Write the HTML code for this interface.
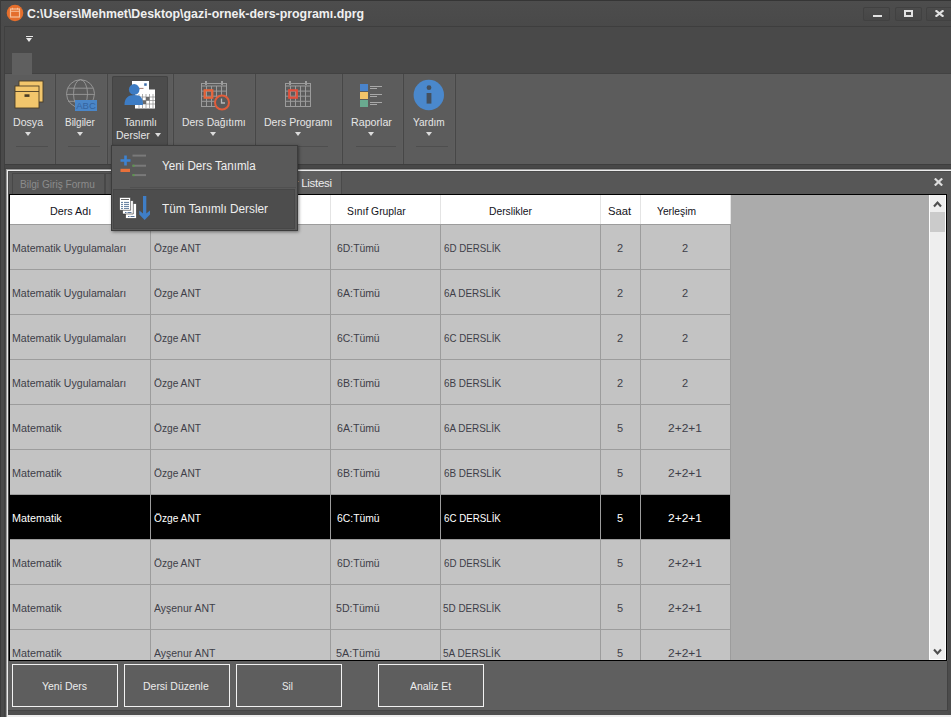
<!DOCTYPE html>
<html><head><meta charset="utf-8"><style>
*{margin:0;padding:0;box-sizing:border-box}
html,body{width:951px;height:717px;overflow:hidden;background:#4b4b4b;font-family:"Liberation Sans",sans-serif}
.a{position:absolute}
.t{position:absolute;white-space:nowrap;line-height:1}
.arr{position:absolute;width:0;height:0;border-left:3.5px solid transparent;border-right:3.5px solid transparent;border-top:4px solid #dcdcdc}
</style></head><body>
<div class="a" style="left:0px;top:0px;width:951px;height:27px;background:linear-gradient(#4d4d4d,#494949);"></div>
<div class="a" style="left:0px;top:0px;width:951px;height:1px;background:#353535;"></div>
<div class="a" style="left:0px;top:0px;width:1px;height:717px;background:#3a3a3a;"></div>
<div class="a" style="left:1px;top:26px;width:4px;height:691px;background:#4a4a4a;"></div>
<div class="a" style="left:4px;top:26px;width:1px;height:691px;background:#404040;"></div>
<div class="a" style="left:5px;top:26px;width:946px;height:1px;background:#3e3e3e;"></div>
<div class="a" style="left:5px;top:27px;width:946px;height:46px;background:#494949;"></div>
<div class="a" style="left:5px;top:73px;width:946px;height:1px;background:#424242;"></div>
<div class="a" style="left:5px;top:74px;width:946px;height:90px;background:#5c5c5c;"></div>
<div class="a" style="left:12px;top:53px;width:20px;height:22px;background:#5f5f5f;"></div>
<div class="a" style="left:5px;top:164px;width:946px;height:5px;background:#484848;"></div>
<div class="a" style="left:5px;top:164px;width:946px;height:1px;background:#3e3e3e;"></div>
<div class="a" style="left:5px;top:168px;width:946px;height:1px;background:#424242;"></div>
<div class="a" style="left:6px;top:169px;width:945px;height:548px;background:#575757;"></div>
<div class="a" style="left:6px;top:169px;width:945px;height:1px;background:#9a9a9a;"></div>
<div class="a" style="left:7px;top:170px;width:944px;height:1px;background:#ececec;"></div>
<div class="a" style="left:6px;top:170px;width:1px;height:547px;background:#9a9a9a;"></div>
<div class="a" style="left:7px;top:170px;width:1px;height:547px;background:#ececec;"></div>
<div class="a" style="left:8px;top:171px;width:943px;height:1px;background:#4a4a4a;"></div>
<div class="a" style="left:8px;top:171px;width:1px;height:546px;background:#4a4a4a;"></div>
<div class="a" style="left:7px;top:715px;width:944px;height:2px;background:#ececec;"></div>
<div class="a" style="left:8px;top:710px;width:943px;height:5px;background:#4e4e4e;"></div>
<div class="a" style="left:8px;top:710px;width:940px;height:1px;background:#444444;"></div>
<div class="a" style="left:947px;top:661px;width:1px;height:49px;background:#424242;"></div>
<div class="a" style="left:948px;top:190px;width:3px;height:525px;background:linear-gradient(#555,#4c4c4c 30%);"></div>
<svg class="a" style="left:6px;top:4px" width="18" height="18" viewBox="0 0 18 18"><circle cx="9" cy="9" r="8.3" fill="#e46e2c"/><rect x="4.5" y="5" width="9" height="8" fill="none" stroke="#f6c09a" stroke-width="1.2"/><line x1="4.5" y1="7.3" x2="13.5" y2="7.3" stroke="#f6c09a" stroke-width="1"/><line x1="6.5" y1="3.8" x2="6.5" y2="5.5" stroke="#f6c09a" stroke-width="1"/><line x1="11.5" y1="3.8" x2="11.5" y2="5.5" stroke="#f6c09a" stroke-width="1"/></svg>
<div class="t" style="left:27.0px;top:7.7px;font-size:12px;font-weight:bold;letter-spacing:0px;color:#f0f0f0;transform:scaleX(1.0297);transform-origin:0 0;">C:\Users\Mehmet\Desktop\gazi-ornek-ders-programı.dprg</div>
<div class="a" style="left:863px;top:7px;width:27px;height:14px;border-radius:2px;background:linear-gradient(#4c4c4c,#464646);box-shadow:inset 0 0 0 1px #414141"></div>
<div class="a" style="left:895px;top:7px;width:27px;height:14px;border-radius:2px;background:linear-gradient(#4c4c4c,#464646);box-shadow:inset 0 0 0 1px #414141"></div>
<div class="a" style="left:926px;top:7px;width:27px;height:14px;border-radius:2px;background:linear-gradient(#4c4c4c,#464646);box-shadow:inset 0 0 0 1px #414141"></div>
<div class="a" style="left:873px;top:14.5px;width:9px;height:2.5px;background:#e2e2e2;"></div>
<div class="a" style="left:904px;top:10px;width:9px;height:7px;border:2px solid #e2e2e2;border-top-width:2.5px"></div>
<svg class="a" style="left:935px;top:10px" width="9" height="7" viewBox="0 0 9 7"><path d="M0.6 0.3 L8.4 6.7 M8.4 0.3 L0.6 6.7" stroke="#e2e2e2" stroke-width="2.1"/></svg>
<div class="a" style="left:26px;top:36px;width:7px;height:1px;background:#e8e8e8;"></div>
<div class="arr" style="left:26px;top:38px;border-top:4px solid #e8e8e8"></div>
<div class="a" style="left:55px;top:74px;width:1px;height:90px;background:#474747;"></div>
<div class="a" style="left:54px;top:74px;width:1px;height:90px;background:#5e5e5e;"></div>
<div class="a" style="left:107px;top:74px;width:1px;height:90px;background:#474747;"></div>
<div class="a" style="left:106px;top:74px;width:1px;height:90px;background:#5e5e5e;"></div>
<div class="a" style="left:173px;top:74px;width:1px;height:90px;background:#474747;"></div>
<div class="a" style="left:172px;top:74px;width:1px;height:90px;background:#5e5e5e;"></div>
<div class="a" style="left:255px;top:74px;width:1px;height:90px;background:#474747;"></div>
<div class="a" style="left:254px;top:74px;width:1px;height:90px;background:#5e5e5e;"></div>
<div class="a" style="left:342px;top:74px;width:1px;height:90px;background:#474747;"></div>
<div class="a" style="left:341px;top:74px;width:1px;height:90px;background:#5e5e5e;"></div>
<div class="a" style="left:403px;top:74px;width:1px;height:90px;background:#474747;"></div>
<div class="a" style="left:402px;top:74px;width:1px;height:90px;background:#5e5e5e;"></div>
<div class="a" style="left:455px;top:74px;width:1px;height:90px;background:#474747;"></div>
<div class="a" style="left:454px;top:74px;width:1px;height:90px;background:#5e5e5e;"></div>
<div class="a" style="left:112px;top:76px;width:56px;height:70px;background:#4c4c4c;border-radius:2px;box-shadow:inset 0 0 0 1px #434343"></div>
<div class="t" style="left:12.6px;top:117.4px;font-size:11.5px;font-weight:normal;letter-spacing:0px;color:#e6e6e6;transform:scaleX(0.9219);transform-origin:0 0;">Dosya</div>
<div class="t" style="left:64.6px;top:117.4px;font-size:11.5px;font-weight:normal;letter-spacing:0px;color:#e6e6e6;transform:scaleX(0.8676);transform-origin:0 0;">Bilgiler</div>
<div class="t" style="left:123.5px;top:117.4px;font-size:11.5px;font-weight:normal;letter-spacing:0px;color:#e6e6e6;transform:scaleX(0.8889);transform-origin:0 0;">Tanımlı</div>
<div class="t" style="left:115.9px;top:130.0px;font-size:11.5px;font-weight:normal;letter-spacing:0px;color:#e6e6e6;transform:scaleX(0.9111);transform-origin:0 0;">Dersler</div>
<div class="t" style="left:181.5px;top:117.4px;font-size:11.5px;font-weight:normal;letter-spacing:0px;color:#e6e6e6;transform:scaleX(0.8971);transform-origin:0 0;">Ders Dağıtımı</div>
<div class="t" style="left:263.6px;top:117.4px;font-size:11.5px;font-weight:normal;letter-spacing:0px;color:#e6e6e6;transform:scaleX(0.9164);transform-origin:0 0;">Ders Programı</div>
<div class="t" style="left:350.6px;top:117.4px;font-size:11.5px;font-weight:normal;letter-spacing:0px;color:#e6e6e6;transform:scaleX(0.9279);transform-origin:0 0;">Raporlar</div>
<div class="t" style="left:412.9px;top:117.4px;font-size:11.5px;font-weight:normal;letter-spacing:0px;color:#e6e6e6;transform:scaleX(0.875);transform-origin:0 0;">Yardım</div>
<div class="arr" style="left:25px;top:132px"></div>
<div class="arr" style="left:77px;top:132px"></div>
<div class="arr" style="left:154.5px;top:132.5px"></div>
<div class="arr" style="left:210px;top:132px"></div>
<div class="arr" style="left:294.5px;top:132px"></div>
<div class="arr" style="left:368px;top:132px"></div>
<div class="arr" style="left:425.5px;top:132px"></div>
<div class="a" style="left:16px;top:146px;width:32px;height:1px;background:#4e4e4e;"></div>
<div class="a" style="left:68px;top:146px;width:32px;height:1px;background:#4e4e4e;"></div>
<div class="a" style="left:120px;top:146px;width:38px;height:1px;background:#4e4e4e;"></div>
<div class="a" style="left:186px;top:146px;width:60px;height:1px;background:#4e4e4e;"></div>
<div class="a" style="left:297px;top:146px;width:31px;height:1px;background:#4e4e4e;"></div>
<div class="a" style="left:356px;top:146px;width:40px;height:1px;background:#4e4e4e;"></div>
<div class="a" style="left:416px;top:146px;width:32px;height:1px;background:#4e4e4e;"></div>
<svg class="a" style="left:14px;top:80px" width="31" height="29" viewBox="0 0 31 29"><rect x="5" y="1" width="24" height="21" fill="#f2c66c" stroke="#4a3d26" stroke-width="0.9"/><rect x="1" y="6" width="24" height="22" fill="#f2c66c" stroke="#4a3d26" stroke-width="0.9"/><line x1="1" y1="11.5" x2="25" y2="11.5" stroke="#4a3d26" stroke-width="0.9"/><rect x="10.5" y="14.3" width="5" height="2.6" fill="#4a3d26"/></svg>
<svg class="a" style="left:64px;top:78px" width="36" height="35" viewBox="0 0 36 35"><g fill="none" stroke="#9a9a9a" stroke-width="0.9"><circle cx="16.5" cy="15.7" r="14"/><ellipse cx="16.5" cy="15.7" rx="7" ry="14"/><line x1="4" y1="10.2" x2="29" y2="10.2"/><line x1="2.5" y1="16.4" x2="30.5" y2="16.4"/><line x1="4" y1="23.3" x2="29" y2="23.3"/></g><rect x="11" y="22" width="22" height="11" fill="#4a86c8"/><text x="22" y="31.3" font-family="Liberation Sans" font-size="9.5" fill="#3564a0" text-anchor="middle">ABC</text></svg>
<svg class="a" style="left:122px;top:79px" width="36" height="32" viewBox="0 0 36 32"><rect x="10" y="2" width="17" height="12.5" fill="#ffffff"/><rect x="22.2" y="4.3" width="2.5" height="2.5" fill="#3a6aa8"/><line x1="16" y1="9.4" x2="21.5" y2="9.4" stroke="#8a5a50" stroke-width="0.8"/><line x1="16" y1="11.5" x2="21.5" y2="11.5" stroke="#8a5a50" stroke-width="0.8"/><rect x="13" y="10.5" width="20" height="19" fill="#ffffff"/><g stroke="#8a8a8a" stroke-width="0.7"><line x1="17" y1="15" x2="17" y2="29"/><line x1="20.5" y1="15" x2="20.5" y2="29"/><line x1="24" y1="15" x2="24" y2="29"/><line x1="27.5" y1="15" x2="27.5" y2="29"/><line x1="31" y1="15" x2="31" y2="29"/><line x1="15" y1="18" x2="33" y2="18"/><line x1="15" y1="21.5" x2="33" y2="21.5"/><line x1="15" y1="25" x2="33" y2="25"/></g><rect x="24" y="18" width="3.5" height="3.5" fill="#6a6a6a"/><rect x="20.5" y="21.5" width="3.5" height="3.5" fill="#6a6a6a"/><circle cx="12.2" cy="10.4" r="5.3" fill="#3d7cc4"/><path d="M2.5 26 C2.5 19 6 16 12.5 16 C19 16 21 19 21 26 Z" fill="#3d7cc4"/></svg>
<svg class="a" style="left:200px;top:80px" width="34" height="34" viewBox="0 0 34 34"><g fill="none" stroke="#9c9c9c" stroke-width="1"><rect x="1.5" y="3.5" width="25" height="23"/><line x1="1.5" y1="6" x2="26.5" y2="6"/><line x1="6.5" y1="6" x2="6.5" y2="26.5"/><line x1="11.5" y1="6" x2="11.5" y2="26.5"/><line x1="16.5" y1="6" x2="16.5" y2="26.5"/><line x1="21.5" y1="6" x2="21.5" y2="26.5"/><line x1="1.5" y1="11.1" x2="26.5" y2="11.1"/><line x1="1.5" y1="16.2" x2="26.5" y2="16.2"/><line x1="1.5" y1="21.3" x2="26.5" y2="21.3"/></g><rect x="5" y="1" width="2" height="4" fill="#9c9c9c"/><rect x="21" y="1" width="2" height="4" fill="#9c9c9c"/><rect x="4.7" y="10.3" width="7.6" height="7.4" fill="none" stroke="#e8643a" stroke-width="2.2"/><circle cx="22" cy="22.5" r="7" fill="#5a5a5a" stroke="#e05c3a" stroke-width="2"/><path d="M21.5 18.5 V23 H25" fill="none" stroke="#b8b8b8" stroke-width="1.3"/></svg>
<svg class="a" style="left:284px;top:80px" width="34" height="34" viewBox="0 0 34 34"><g fill="none" stroke="#9c9c9c" stroke-width="1"><rect x="1.5" y="3.5" width="25" height="23"/><line x1="1.5" y1="6" x2="26.5" y2="6"/><line x1="6.5" y1="6" x2="6.5" y2="26.5"/><line x1="11.5" y1="6" x2="11.5" y2="26.5"/><line x1="16.5" y1="6" x2="16.5" y2="26.5"/><line x1="21.5" y1="6" x2="21.5" y2="26.5"/><line x1="1.5" y1="11.1" x2="26.5" y2="11.1"/><line x1="1.5" y1="16.2" x2="26.5" y2="16.2"/><line x1="1.5" y1="21.3" x2="26.5" y2="21.3"/></g><rect x="5" y="1" width="2" height="4" fill="#9c9c9c"/><rect x="21" y="1" width="2" height="4" fill="#9c9c9c"/><rect x="5.2" y="10.3" width="7.6" height="7.4" fill="none" stroke="#e0503c" stroke-width="2.2"/></svg>
<svg class="a" style="left:358px;top:82px" width="28" height="28" viewBox="0 0 28 28"><rect x="2" y="2" width="8" height="7" fill="#4a84cc"/><rect x="2" y="10" width="8" height="7" fill="#f2c46a"/><rect x="2" y="18" width="8" height="7" fill="#6aaa90"/><g stroke="#a8a8a8" stroke-width="1"><line x1="12" y1="4.5" x2="24" y2="4.5"/><line x1="12" y1="6.5" x2="19" y2="6.5"/><line x1="12" y1="12.5" x2="24" y2="12.5"/><line x1="12" y1="14.5" x2="19" y2="14.5"/><line x1="12" y1="20.5" x2="24" y2="20.5"/><line x1="12" y1="22.5" x2="19" y2="22.5"/></g></svg>
<svg class="a" style="left:412px;top:78px" width="34" height="34" viewBox="0 0 34 34"><circle cx="16.8" cy="17" r="15.2" fill="#4a88cc"/><circle cx="17" cy="9.7" r="2.4" fill="#44505e"/><rect x="14.6" y="15" width="4.8" height="10.6" fill="#44505e"/></svg>
<div class="a" style="left:12px;top:173px;width:93px;height:21px;background:#575757;border:1px solid #484848;border-bottom:none"></div>
<div class="t" style="left:19.9px;top:178.7px;font-size:11px;font-weight:normal;letter-spacing:0px;color:#8c8c8c;transform:scaleX(0.92);transform-origin:0 0;">Bilgi Giriş Formu</div>
<div class="a" style="left:105px;top:173px;width:150px;height:21px;background:#575757;border:1px solid #484848;border-bottom:none"></div>
<div class="a" style="left:240px;top:171px;width:102px;height:23px;background:#5f5f5f;"></div>
<div class="a" style="left:341px;top:171px;width:1px;height:23px;background:#4a4a4a;"></div>
<div class="t" style="left:225.5px;top:177.7px;font-size:11.5px;font-weight:normal;letter-spacing:-0.3px;color:#ececec;">Tanımlı Dersler Listesi</div>
<svg class="a" style="left:934px;top:178px" width="9" height="8" viewBox="0 0 9 8"><path d="M0.8 0.5 L8.2 7.5 M8.2 0.5 L0.8 7.5" stroke="#dcdcdc" stroke-width="2.2"/></svg>
<div class="a" style="left:9px;top:194px;width:938px;height:467px;background:#ababab;border:1px solid #000;overflow:hidden">
<div class="a" style="left:0px;top:0px;width:721px;height:29px;background:#ffffff;"></div>
<div class="a" style="left:0px;top:30px;width:721px;height:44px;background:#c3c3c3;"></div>
<div class="a" style="left:0px;top:75px;width:721px;height:44px;background:#c3c3c3;"></div>
<div class="a" style="left:0px;top:120px;width:721px;height:44px;background:#c3c3c3;"></div>
<div class="a" style="left:0px;top:165px;width:721px;height:44px;background:#c3c3c3;"></div>
<div class="a" style="left:0px;top:210px;width:721px;height:44px;background:#c3c3c3;"></div>
<div class="a" style="left:0px;top:255px;width:721px;height:44px;background:#c3c3c3;"></div>
<div class="a" style="left:0px;top:300px;width:721px;height:44px;background:#000000;"></div>
<div class="a" style="left:0px;top:345px;width:721px;height:44px;background:#c3c3c3;"></div>
<div class="a" style="left:0px;top:390px;width:721px;height:44px;background:#c3c3c3;"></div>
<div class="a" style="left:0px;top:435px;width:721px;height:44px;background:#c3c3c3;"></div>
<div class="a" style="left:0px;top:29px;width:721px;height:1px;background:#9c9c9c;"></div>
<div class="a" style="left:0px;top:74px;width:721px;height:1px;background:#9c9c9c;"></div>
<div class="a" style="left:0px;top:119px;width:721px;height:1px;background:#9c9c9c;"></div>
<div class="a" style="left:0px;top:164px;width:721px;height:1px;background:#9c9c9c;"></div>
<div class="a" style="left:0px;top:209px;width:721px;height:1px;background:#9c9c9c;"></div>
<div class="a" style="left:0px;top:254px;width:721px;height:1px;background:#9c9c9c;"></div>
<div class="a" style="left:0px;top:299px;width:721px;height:1px;background:#9c9c9c;"></div>
<div class="a" style="left:0px;top:344px;width:721px;height:1px;background:#9c9c9c;"></div>
<div class="a" style="left:0px;top:389px;width:721px;height:1px;background:#9c9c9c;"></div>
<div class="a" style="left:0px;top:434px;width:721px;height:1px;background:#9c9c9c;"></div>
<div class="a" style="left:0px;top:479px;width:721px;height:1px;background:#9c9c9c;"></div>
<div class="a" style="left:140px;top:0px;width:1px;height:29px;background:#e4e4e4;"></div>
<div class="a" style="left:140px;top:29px;width:1px;height:436px;background:#9c9c9c;"></div>
<div class="a" style="left:320px;top:0px;width:1px;height:29px;background:#e4e4e4;"></div>
<div class="a" style="left:320px;top:29px;width:1px;height:436px;background:#9c9c9c;"></div>
<div class="a" style="left:430px;top:0px;width:1px;height:29px;background:#e4e4e4;"></div>
<div class="a" style="left:430px;top:29px;width:1px;height:436px;background:#9c9c9c;"></div>
<div class="a" style="left:590px;top:0px;width:1px;height:29px;background:#e4e4e4;"></div>
<div class="a" style="left:590px;top:29px;width:1px;height:436px;background:#9c9c9c;"></div>
<div class="a" style="left:630px;top:0px;width:1px;height:29px;background:#e4e4e4;"></div>
<div class="a" style="left:630px;top:29px;width:1px;height:436px;background:#9c9c9c;"></div>
<div class="a" style="left:720px;top:0px;width:1px;height:29px;background:#e4e4e4;"></div>
<div class="a" style="left:720px;top:29px;width:1px;height:436px;background:#9c9c9c;"></div>
<div class="t" style="left:40.0px;top:11.0px;font-size:11px;font-weight:normal;letter-spacing:0px;color:#121220;transform:scaleX(0.9756);transform-origin:0 0;">Ders Adı</div>
<div class="t" style="left:195.0px;top:11.0px;font-size:11px;font-weight:normal;letter-spacing:0px;color:#121220;transform:scaleX(0.9016);transform-origin:0 0;">Öğretmenler</div>
<div class="t" style="left:336.8px;top:11.0px;font-size:11px;font-weight:normal;letter-spacing:0px;color:#121220;transform:scaleX(0.9393);transform-origin:0 0;">Sınıf Gruplar</div>
<div class="t" style="left:478.7px;top:11.0px;font-size:11px;font-weight:normal;letter-spacing:0px;color:#121220;transform:scaleX(0.9378);transform-origin:0 0;">Derslikler</div>
<div class="t" style="left:598.0px;top:11.0px;font-size:11px;font-weight:normal;letter-spacing:0px;color:#121220;transform:scaleX(1.0227);transform-origin:0 0;">Saat</div>
<div class="t" style="left:646.7px;top:11.0px;font-size:11px;font-weight:normal;letter-spacing:0px;color:#121220;transform:scaleX(0.9341);transform-origin:0 0;">Yerleşim</div>
<div class="t" style="left:2.3px;top:48.0px;font-size:11px;font-weight:normal;letter-spacing:0px;color:#3e3e48;transform:scaleX(0.9632);transform-origin:0 0;">Matematik Uygulamaları</div>
<div class="t" style="left:143.8px;top:48.0px;font-size:11px;font-weight:normal;letter-spacing:0px;color:#3e3e48;transform:scaleX(0.9255);transform-origin:0 0;">Özge ANT</div>
<div class="t" style="left:326.5px;top:48.0px;font-size:11px;font-weight:normal;letter-spacing:0px;color:#3e3e48;transform:scaleX(0.9422);transform-origin:0 0;">6D:Tümü</div>
<div class="t" style="left:433.7px;top:48.0px;font-size:11px;font-weight:normal;letter-spacing:0px;color:#3e3e48;transform:scaleX(0.8859);transform-origin:0 0;">6D DERSLİK</div>
<div class="t" style="left:607.0px;top:48.0px;font-size:11px;font-weight:normal;letter-spacing:0px;color:#3e3e48;">2</div>
<div class="t" style="left:672.0px;top:48.0px;font-size:11px;font-weight:normal;letter-spacing:0px;color:#3e3e48;">2</div>
<div class="t" style="left:2.3px;top:93.0px;font-size:11px;font-weight:normal;letter-spacing:0px;color:#3e3e48;transform:scaleX(0.9632);transform-origin:0 0;">Matematik Uygulamaları</div>
<div class="t" style="left:143.8px;top:93.0px;font-size:11px;font-weight:normal;letter-spacing:0px;color:#3e3e48;transform:scaleX(0.9255);transform-origin:0 0;">Özge ANT</div>
<div class="t" style="left:326.5px;top:93.0px;font-size:11px;font-weight:normal;letter-spacing:0px;color:#3e3e48;transform:scaleX(0.9636);transform-origin:0 0;">6A:Tümü</div>
<div class="t" style="left:433.7px;top:93.0px;font-size:11px;font-weight:normal;letter-spacing:0px;color:#3e3e48;transform:scaleX(0.9);transform-origin:0 0;">6A DERSLİK</div>
<div class="t" style="left:607.0px;top:93.0px;font-size:11px;font-weight:normal;letter-spacing:0px;color:#3e3e48;">2</div>
<div class="t" style="left:672.0px;top:93.0px;font-size:11px;font-weight:normal;letter-spacing:0px;color:#3e3e48;">2</div>
<div class="t" style="left:2.3px;top:138.0px;font-size:11px;font-weight:normal;letter-spacing:0px;color:#3e3e48;transform:scaleX(0.9632);transform-origin:0 0;">Matematik Uygulamaları</div>
<div class="t" style="left:143.8px;top:138.0px;font-size:11px;font-weight:normal;letter-spacing:0px;color:#3e3e48;transform:scaleX(0.9255);transform-origin:0 0;">Özge ANT</div>
<div class="t" style="left:326.5px;top:138.0px;font-size:11px;font-weight:normal;letter-spacing:0px;color:#3e3e48;transform:scaleX(0.9422);transform-origin:0 0;">6C:Tümü</div>
<div class="t" style="left:433.7px;top:138.0px;font-size:11px;font-weight:normal;letter-spacing:0px;color:#3e3e48;transform:scaleX(0.8859);transform-origin:0 0;">6C DERSLİK</div>
<div class="t" style="left:607.0px;top:138.0px;font-size:11px;font-weight:normal;letter-spacing:0px;color:#3e3e48;">2</div>
<div class="t" style="left:672.0px;top:138.0px;font-size:11px;font-weight:normal;letter-spacing:0px;color:#3e3e48;">2</div>
<div class="t" style="left:2.3px;top:183.0px;font-size:11px;font-weight:normal;letter-spacing:0px;color:#3e3e48;transform:scaleX(0.9632);transform-origin:0 0;">Matematik Uygulamaları</div>
<div class="t" style="left:143.8px;top:183.0px;font-size:11px;font-weight:normal;letter-spacing:0px;color:#3e3e48;transform:scaleX(0.9255);transform-origin:0 0;">Özge ANT</div>
<div class="t" style="left:326.5px;top:183.0px;font-size:11px;font-weight:normal;letter-spacing:0px;color:#3e3e48;transform:scaleX(0.9636);transform-origin:0 0;">6B:Tümü</div>
<div class="t" style="left:433.7px;top:183.0px;font-size:11px;font-weight:normal;letter-spacing:0px;color:#3e3e48;transform:scaleX(0.9);transform-origin:0 0;">6B DERSLİK</div>
<div class="t" style="left:607.0px;top:183.0px;font-size:11px;font-weight:normal;letter-spacing:0px;color:#3e3e48;">2</div>
<div class="t" style="left:672.0px;top:183.0px;font-size:11px;font-weight:normal;letter-spacing:0px;color:#3e3e48;">2</div>
<div class="t" style="left:2.3px;top:228.0px;font-size:11px;font-weight:normal;letter-spacing:0px;color:#3e3e48;transform:scaleX(0.98);transform-origin:0 0;">Matematik</div>
<div class="t" style="left:143.8px;top:228.0px;font-size:11px;font-weight:normal;letter-spacing:0px;color:#3e3e48;transform:scaleX(0.9255);transform-origin:0 0;">Özge ANT</div>
<div class="t" style="left:326.5px;top:228.0px;font-size:11px;font-weight:normal;letter-spacing:0px;color:#3e3e48;transform:scaleX(0.9636);transform-origin:0 0;">6A:Tümü</div>
<div class="t" style="left:433.7px;top:228.0px;font-size:11px;font-weight:normal;letter-spacing:0px;color:#3e3e48;transform:scaleX(0.9);transform-origin:0 0;">6A DERSLİK</div>
<div class="t" style="left:607.0px;top:228.0px;font-size:11px;font-weight:normal;letter-spacing:0px;color:#3e3e48;">5</div>
<div class="t" style="left:658.2px;top:228.0px;font-size:11px;font-weight:normal;letter-spacing:0px;color:#3e3e48;transform:scaleX(1.0871);transform-origin:0 0;">2+2+1</div>
<div class="t" style="left:2.3px;top:273.0px;font-size:11px;font-weight:normal;letter-spacing:0px;color:#3e3e48;transform:scaleX(0.98);transform-origin:0 0;">Matematik</div>
<div class="t" style="left:143.8px;top:273.0px;font-size:11px;font-weight:normal;letter-spacing:0px;color:#3e3e48;transform:scaleX(0.9255);transform-origin:0 0;">Özge ANT</div>
<div class="t" style="left:326.5px;top:273.0px;font-size:11px;font-weight:normal;letter-spacing:0px;color:#3e3e48;transform:scaleX(0.9636);transform-origin:0 0;">6B:Tümü</div>
<div class="t" style="left:433.7px;top:273.0px;font-size:11px;font-weight:normal;letter-spacing:0px;color:#3e3e48;transform:scaleX(0.9);transform-origin:0 0;">6B DERSLİK</div>
<div class="t" style="left:607.0px;top:273.0px;font-size:11px;font-weight:normal;letter-spacing:0px;color:#3e3e48;">5</div>
<div class="t" style="left:658.2px;top:273.0px;font-size:11px;font-weight:normal;letter-spacing:0px;color:#3e3e48;transform:scaleX(1.0871);transform-origin:0 0;">2+2+1</div>
<div class="t" style="left:2.3px;top:318.0px;font-size:11px;font-weight:normal;letter-spacing:0px;color:#ffffff;transform:scaleX(0.98);transform-origin:0 0;">Matematik</div>
<div class="t" style="left:143.8px;top:318.0px;font-size:11px;font-weight:normal;letter-spacing:0px;color:#ffffff;transform:scaleX(0.9255);transform-origin:0 0;">Özge ANT</div>
<div class="t" style="left:326.5px;top:318.0px;font-size:11px;font-weight:normal;letter-spacing:0px;color:#ffffff;transform:scaleX(0.9422);transform-origin:0 0;">6C:Tümü</div>
<div class="t" style="left:433.7px;top:318.0px;font-size:11px;font-weight:normal;letter-spacing:0px;color:#ffffff;transform:scaleX(0.8859);transform-origin:0 0;">6C DERSLİK</div>
<div class="t" style="left:607.0px;top:318.0px;font-size:11px;font-weight:normal;letter-spacing:0px;color:#ffffff;">5</div>
<div class="t" style="left:658.2px;top:318.0px;font-size:11px;font-weight:normal;letter-spacing:0px;color:#ffffff;transform:scaleX(1.0871);transform-origin:0 0;">2+2+1</div>
<div class="t" style="left:2.3px;top:363.0px;font-size:11px;font-weight:normal;letter-spacing:0px;color:#3e3e48;transform:scaleX(0.98);transform-origin:0 0;">Matematik</div>
<div class="t" style="left:143.8px;top:363.0px;font-size:11px;font-weight:normal;letter-spacing:0px;color:#3e3e48;transform:scaleX(0.9255);transform-origin:0 0;">Özge ANT</div>
<div class="t" style="left:326.5px;top:363.0px;font-size:11px;font-weight:normal;letter-spacing:0px;color:#3e3e48;transform:scaleX(0.9422);transform-origin:0 0;">6D:Tümü</div>
<div class="t" style="left:433.7px;top:363.0px;font-size:11px;font-weight:normal;letter-spacing:0px;color:#3e3e48;transform:scaleX(0.8859);transform-origin:0 0;">6D DERSLİK</div>
<div class="t" style="left:607.0px;top:363.0px;font-size:11px;font-weight:normal;letter-spacing:0px;color:#3e3e48;">5</div>
<div class="t" style="left:658.2px;top:363.0px;font-size:11px;font-weight:normal;letter-spacing:0px;color:#3e3e48;transform:scaleX(1.0871);transform-origin:0 0;">2+2+1</div>
<div class="t" style="left:2.3px;top:408.0px;font-size:11px;font-weight:normal;letter-spacing:0px;color:#3e3e48;transform:scaleX(0.98);transform-origin:0 0;">Matematik</div>
<div class="t" style="left:143.8px;top:408.0px;font-size:11px;font-weight:normal;letter-spacing:0px;color:#3e3e48;transform:scaleX(0.9523);transform-origin:0 0;">Ayşenur ANT</div>
<div class="t" style="left:325.5px;top:408.0px;font-size:11px;font-weight:normal;letter-spacing:0px;color:#3e3e48;transform:scaleX(0.9636);transform-origin:0 0;">5D:Tümü</div>
<div class="t" style="left:432.8px;top:408.0px;font-size:11px;font-weight:normal;letter-spacing:0px;color:#3e3e48;transform:scaleX(0.9);transform-origin:0 0;">5D DERSLİK</div>
<div class="t" style="left:607.0px;top:408.0px;font-size:11px;font-weight:normal;letter-spacing:0px;color:#3e3e48;">5</div>
<div class="t" style="left:658.2px;top:408.0px;font-size:11px;font-weight:normal;letter-spacing:0px;color:#3e3e48;transform:scaleX(1.0871);transform-origin:0 0;">2+2+1</div>
<div class="t" style="left:2.3px;top:453.0px;font-size:11px;font-weight:normal;letter-spacing:0px;color:#3e3e48;transform:scaleX(0.98);transform-origin:0 0;">Matematik</div>
<div class="t" style="left:143.8px;top:453.0px;font-size:11px;font-weight:normal;letter-spacing:0px;color:#3e3e48;transform:scaleX(0.9523);transform-origin:0 0;">Ayşenur ANT</div>
<div class="t" style="left:325.5px;top:453.0px;font-size:11px;font-weight:normal;letter-spacing:0px;color:#3e3e48;transform:scaleX(0.986);transform-origin:0 0;">5A:Tümü</div>
<div class="t" style="left:432.8px;top:453.0px;font-size:11px;font-weight:normal;letter-spacing:0px;color:#3e3e48;transform:scaleX(0.9145);transform-origin:0 0;">5A DERSLİK</div>
<div class="t" style="left:607.0px;top:453.0px;font-size:11px;font-weight:normal;letter-spacing:0px;color:#3e3e48;">5</div>
<div class="t" style="left:658.2px;top:453.0px;font-size:11px;font-weight:normal;letter-spacing:0px;color:#3e3e48;transform:scaleX(1.0871);transform-origin:0 0;">2+2+1</div>
<div class="a" style="left:919px;top:0px;width:17px;height:465px;background:#fdfdfd;"></div>
<div class="a" style="left:920px;top:0px;width:15px;height:464px;background:#eeeeee;"></div>
<div class="a" style="left:920px;top:17px;width:15px;height:20px;background:#cbcbcb;"></div>
<svg class="a" style="left:923px;top:5px" width="9" height="8" viewBox="0 0 9 8"><path d="M1 6.5 L4.5 2.5 L8 6.5" fill="none" stroke="#4e4e4e" stroke-width="2.1"/></svg>
<svg class="a" style="left:923px;top:453px" width="9" height="8" viewBox="0 0 9 8"><path d="M1 1.5 L4.5 5.5 L8 1.5" fill="none" stroke="#4e4e4e" stroke-width="2.1"/></svg>
</div>
<div class="a" style="left:8px;top:661px;width:939px;height:49px;background:#5f5f5f;"></div>
<div class="a" style="left:12px;top:664px;width:106px;height:43px;border:1px solid #f2f2f2;background:#5e5e5e"></div>
<div class="t" style="left:41.6px;top:681.0px;font-size:11px;font-weight:normal;letter-spacing:0px;color:#ececec;transform:scaleX(0.9532);transform-origin:0 0;">Yeni Ders</div>
<div class="a" style="left:124px;top:664px;width:106px;height:43px;border:1px solid #f2f2f2;background:#5e5e5e"></div>
<div class="t" style="left:142.6px;top:681.0px;font-size:11px;font-weight:normal;letter-spacing:0px;color:#ececec;transform:scaleX(0.9515);transform-origin:0 0;">Dersi Düzenle</div>
<div class="a" style="left:236px;top:664px;width:106px;height:43px;border:1px solid #f2f2f2;background:#5e5e5e"></div>
<div class="t" style="left:281.7px;top:681.0px;font-size:11px;font-weight:normal;letter-spacing:0px;color:#ececec;transform:scaleX(0.8909);transform-origin:0 0;">Sil</div>
<div class="a" style="left:378px;top:664px;width:106px;height:43px;border:1px solid #f2f2f2;background:#5e5e5e"></div>
<div class="t" style="left:410.0px;top:681.0px;font-size:11px;font-weight:normal;letter-spacing:0px;color:#ececec;transform:scaleX(0.9488);transform-origin:0 0;">Analiz Et</div>
<div class="a" style="left:111px;top:145px;width:187px;height:86px;background:#595959;border:1px solid #3c3c3c;box-shadow:1px 1px 3px rgba(0,0,0,.45)"></div>
<div class="a" style="left:113px;top:189px;width:182px;height:40px;background:#4d4d4d;border:1px solid #474747"></div>
<div class="a" style="left:130px;top:187px;width:166px;height:1px;background:#505050;"></div>
<div class="t" style="left:161.6px;top:160.1px;font-size:12px;font-weight:normal;letter-spacing:0px;color:#eeeeee;transform:scaleX(0.968);transform-origin:0 0;">Yeni Ders Tanımla</div>
<div class="t" style="left:161.6px;top:202.9px;font-size:12px;font-weight:normal;letter-spacing:0px;color:#eeeeee;transform:scaleX(0.9833);transform-origin:0 0;">Tüm Tanımlı Dersler</div>
<svg class="a" style="left:118px;top:152px" width="32" height="26" viewBox="0 0 32 26"><path d="M7.5 3.5 V13.5 M2.5 8.5 H12.5" stroke="#3d82d0" stroke-width="2.6"/><rect x="2.5" y="16.8" width="9.5" height="3.2" fill="#e8703a"/><g stroke="#7a7a7a" stroke-width="2"><line x1="14.5" y1="3.6" x2="28" y2="3.6"/><line x1="14.5" y1="13.7" x2="28" y2="13.7"/><line x1="14.5" y1="23.1" x2="28" y2="23.1"/></g><rect x="14.5" y="12.7" width="2" height="2" fill="#5a9a4a"/><rect x="14.5" y="22.1" width="2" height="2" fill="#5a9a4a"/></svg>
<svg class="a" style="left:118px;top:194px" width="36" height="28" viewBox="0 0 36 28"><path d="M7.5 9.5 H18.5 V24.5 H7.5 Z" fill="#fff" stroke="#2e2e2e" stroke-width="0.6"/><path d="M4.5 6.5 H15.3 V20 H4.5 Z" fill="#fff" stroke="#2e2e2e" stroke-width="0.6"/><path d="M1.5 3.4 H12.6 V16.3 H1.5 Z" fill="#fff" stroke="#2e2e2e" stroke-width="0.6"/><g stroke="#46668e" stroke-width="0.9"><line x1="3" y1="5.5" x2="11" y2="5.5" stroke="#555"/><line x1="3" y1="8.4" x2="5" y2="8.4"/><line x1="6" y1="8.4" x2="11" y2="8.4"/><line x1="3" y1="10.4" x2="5" y2="10.4"/><line x1="6" y1="10.4" x2="11" y2="10.4"/><line x1="3" y1="12.4" x2="5" y2="12.4"/><line x1="6" y1="12.4" x2="11" y2="12.4"/><line x1="3" y1="14.4" x2="5" y2="14.4"/><line x1="6" y1="14.4" x2="11" y2="14.4"/><line x1="7" y1="18.5" x2="8.5" y2="18.5"/><line x1="9.5" y1="18.5" x2="13.5" y2="18.5"/><line x1="10" y1="22.5" x2="11.5" y2="22.5"/><line x1="12.5" y1="22.5" x2="16.5" y2="22.5"/></g><path d="M25 2 H28.3 V19.5 L32 16.5 V20.5 L26.65 26 L21.3 20.5 V16.5 L25 19.5 Z" fill="#3f7ec6"/></svg>
</body></html>
